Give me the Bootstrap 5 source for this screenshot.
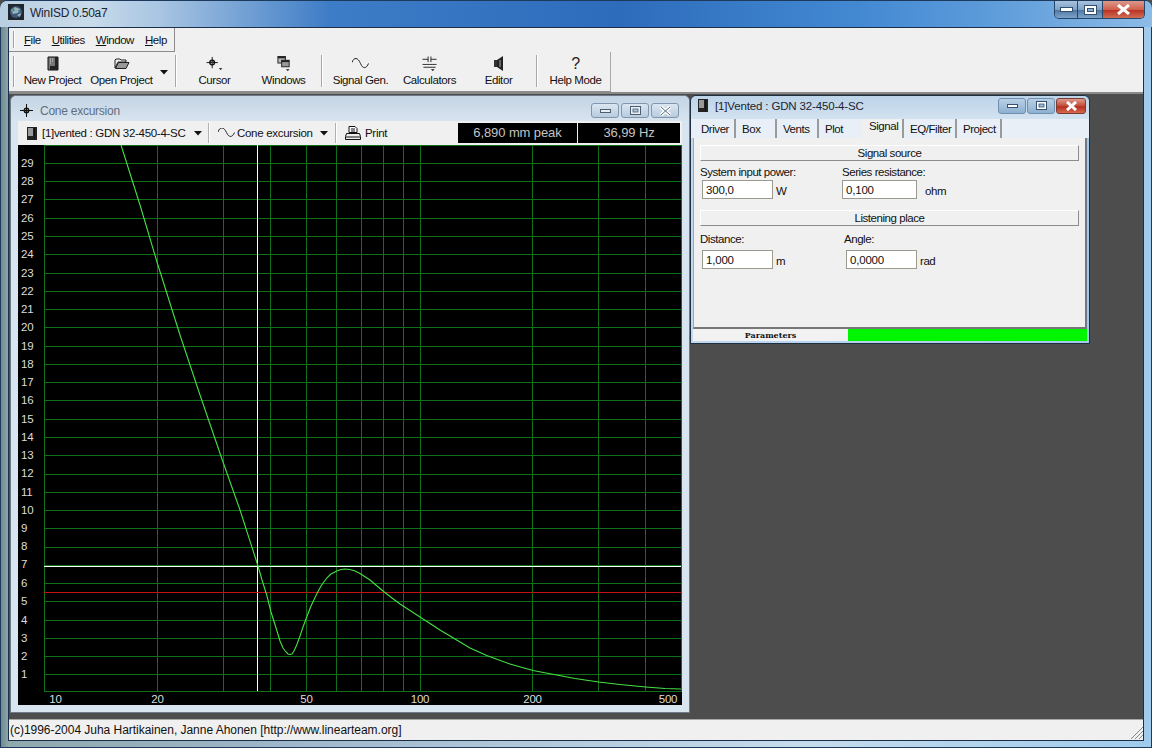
<!DOCTYPE html>
<html lang="en">
<head>
<meta charset="utf-8">
<title>WinISD 0.50a7</title>
<link rel="stylesheet" href="https://cdn.jsdelivr.net/npm/bootstrap@5.3.0/dist/css/bootstrap.min.css">
<style>
html,body{margin:0;width:1152px;height:748px;overflow:hidden;background:#4d4d4d}
body,.app-frame{font-family:"Liberation Sans",Arial,sans-serif;font-size:11.5px;line-height:14px;color:#111;letter-spacing:-.45px}
.app-frame{width:1152px;height:748px;background:linear-gradient(90deg,#6f8b90 0,#8fa9ad 8px,#9fb8cc 300px,#c6dcec 800px,#9fcbec 1152px);border:1px solid #1d3a5c;border-radius:7px 7px 0 0;position:relative}
.app-title{height:26px;margin:0 -1px;padding:0 0 0 8px;background:linear-gradient(90deg,#b9cfe2 0,#c8dbea 90px,#a8c5e2 160px,#3d7cc6 330px,#2d6cbb 620px,#4389d2 860px,#5f9ddb 1000px,#8cbbe6 1152px);border-radius:7px 7px 0 0;font-size:12px;letter-spacing:-.25px;color:#1c2430}
.app-title .caption{margin-left:6px;margin-top:-3px}
.app-ico{margin-top:-4px}
.cap-group{position:absolute;top:0;right:6px;height:18px;border:1px solid #27466c;border-top:0;border-radius:0 0 5px 5px;overflow:hidden}
.cap-min,.cap-max{background:linear-gradient(#a6c2de 0,#7fa2c6 50%,#4d75a2 52%,#7ea3c8 100%);border-right:1px solid #27466c}
.cap-min{width:23px}
.cap-max{width:25px}
.cap-close{width:41px;background:linear-gradient(#dc9a8c 0,#d0604e 50%,#b9301f 52%,#cf6d55 100%)}
.app-client{position:absolute;left:7px;top:26px;width:1136px;height:714px;background:#f0f0f0;border:1px solid #1c2f4a}
.menu-band{height:24px;background:#f0f0f0}
.menu-strip{width:166px;height:24px;padding-left:15px;border-right:1px solid #8c8c8c;border-bottom:1px solid #8c8c8c;position:relative;gap:11px;align-items:center}
.grip{position:absolute;left:4px;width:2px;background:#a0a0a0;border-right:1px solid #fff}
.menu-strip .grip{top:3px;bottom:3px}
.menu-item{color:#111;text-decoration:none}
.menu-item u{text-underline-offset:1px}
.tool-band{height:40px;background:#f0f0f0}
.tool-strip{width:602px;height:40px;padding-left:9px;border-right:1px solid #a8a8a8;border-bottom:1px solid #8c8c8c;position:relative}
.tool-strip .grip{top:4px;bottom:4px}
.tool-btn{width:69px;height:39px;padding:4px 0 0;border:0;border-radius:0;font-size:11.5px;letter-spacing:-.4px;line-height:14px;color:#111;display:flex;flex-direction:column;align-items:center;white-space:nowrap}
.tool-btn svg{display:block;height:15px;margin-bottom:2px}
.tool-btn .qmark{font-size:16px;height:15px;line-height:15px;margin-bottom:2px;color:#222}
.tool-drop{width:16px;display:flex;align-items:center;justify-content:center;padding-top:1px}
.tool-sep{background:#a8a8a8;border-right:1px solid #fff;width:2px;height:32px;margin:3px 3px 0}
.mdi-area{position:relative;height:627px;background:#4d4d4d;border-top:2px solid #8a8a8a}
.cone-win{position:absolute;left:1px;top:1px;width:680px;height:618px;background:#d8e4ef;border:1px solid #6d7b88;border-radius:6px 6px 0 0;padding:0 7px}
.cone-head{height:25px;background:linear-gradient(#c4d4e4,#d8e4ef);margin:0 -7px;padding:4px 10px 0 9px;border-radius:6px 6px 0 0;font-size:12px;letter-spacing:-.25px;color:#5f6f7f;gap:7px}
.win-btns{margin-left:auto;gap:2px}
.win-btn{width:28px;height:15px;border:1px solid #7f96ae;border-radius:3px;background:linear-gradient(#dbe6f1,#b9cbde);display:flex;align-items:center;justify-content:center}
.cone-tools{height:24px;background:#f0f0f0;font-size:11.5px;letter-spacing:-.3px}
.tsep2{width:2px;height:20px;background:#b0b0b0;border-right:1px solid #fff}
.readout{background:#000;color:#c4c4c4;height:20px;font-size:13px;letter-spacing:-.1px;line-height:20px;text-align:center}
.plot-svg{display:block;width:664px;height:560px;background:#000}
.plot-svg text{font-family:"Liberation Sans",Arial,sans-serif;font-size:11.5px;letter-spacing:-.25px;fill:#ddd}
.param-win{position:absolute;left:681px;top:1px;width:400px;height:249px;background:linear-gradient(90deg,#c2d9ee,#a3c9e9);border:1px solid #1e2f42;border-radius:6px 6px 0 0;padding:0 2px 2px}
.param-head{height:23px;margin:0 -2px;padding:0 3px 4px 7px;font-size:11.5px;letter-spacing:-.15px;color:#1c2430;background:linear-gradient(#bcd3e8,#d2e2f0);border-radius:6px 6px 0 0;gap:7px}
.param-head .win-btns{gap:1px}
.param-head .win-btn{height:16px;border-color:#6f8fb1;background:linear-gradient(#b9d0e6,#8eb0d0)}
.param-head .close-red{background:linear-gradient(#dd9c8f,#c24a38 50%,#b52f1e 55%,#d46a50);border-color:#7d3a30;width:30px}
.tab-row{height:19px;background:#e8eff6;margin:0 -2px;padding-left:4px}
.tab-item{display:block;height:19px;padding:3px 0 0 6px;color:#111;text-decoration:none;border-right:2px solid #9a9a9a}
.tab-item.on{background:#f0f0f0;padding-top:0;padding-left:7px}
.param-body{height:191px;background:#f0f0f0;border-right:2px solid #6d7a87;border-left:1px solid #9aa;padding:7px 6px 0 6px;border-bottom:2px solid #777}
.section-bar{height:16px;border:1px solid #fff;border-right-color:#8c8c8c;border-bottom-color:#8c8c8c;text-align:center;line-height:14px;background:#f0f0f0}
.field-lbl{height:14px;line-height:14px;white-space:nowrap}
.win-input{width:71px;height:19px;min-height:0;padding:1px 3px;font-size:11.5px;letter-spacing:-.2px;line-height:15px;border:1px solid #9a9a90;border-radius:0;background:#fff;color:#111;box-shadow:none}
.win-input.wide{width:75px}
.unit{margin-left:3px;margin-top:4px;white-space:nowrap}
.param-status{height:12px;background:#f2f2f2}
.param-status .pname{width:155px;text-align:center;font-family:"DejaVu Serif","Liberation Serif",serif;font-weight:700;font-size:8px;letter-spacing:0;line-height:12px;color:#111}
.param-status .pbar{flex:1;background:#00f500}
.status-line{height:20px;border-top:1px solid #a8a8a8;background:#f0f0f0;padding-left:1px;font-size:12px;letter-spacing:-.03px;line-height:21px;position:relative;color:#111}
.size-grip{position:absolute;right:0;bottom:0}
</style>
</head>
<body>
<div class="app-frame">
  <div class="app-title d-flex align-items-center">
    <svg class="app-ico" width="16" height="16" viewBox="0 0 16 16"><rect width="16" height="16" fill="#20262c"/><circle cx="8" cy="8" r="6" fill="#3b5a78"/><path d="M3 6l4-3 5 2-2 4-5 1zM9 11l4-2-1 4z" fill="#9fb0bd"/><path d="M5 4l2 2-3 2zM10 6l3 1-2 2z" fill="#2c8a8a"/></svg>
    <span class="caption">WinISD 0.50a7</span>
  </div>
  <div class="cap-group d-flex">
    <div class="cap-min d-flex align-items-center justify-content-center"><svg width="13" height="5"><rect x=".5" y=".5" width="12" height="4" fill="#fff" stroke="#34506e"/></svg></div>
    <div class="cap-max d-flex align-items-center justify-content-center"><svg width="13" height="10"><rect x=".5" y=".5" width="12" height="9" fill="#fff" stroke="#34506e"/><rect x="3.5" y="3.5" width="6" height="3" fill="#8fb0d0" stroke="#34506e"/></svg></div>
    <div class="cap-close d-flex align-items-center justify-content-center"><svg width="15" height="11"><path d="M2 1l11 9M13 1L2 10" stroke="#fff" stroke-width="3"/></svg></div>
  </div>

  <div class="app-client">
    <div class="menu-band">
      <nav class="menu-strip d-flex">
        <span class="grip"></span>
        <a class="menu-item" href="#"><u>F</u>ile</a>
        <a class="menu-item" href="#"><u>U</u>tilities</a>
        <a class="menu-item" href="#"><u>W</u>indow</a>
        <a class="menu-item" href="#"><u>H</u>elp</a>
      </nav>
    </div>
    <div class="tool-band">
      <div class="tool-strip d-flex">
        <span class="grip"></span>
        <button class="btn tool-btn"><svg width="12" height="15" viewBox="0 0 12 15"><path d="M1 1h10v13H1z" fill="#777" stroke="#111"/><path d="M8 1h3v13H8zM3 10h5v4H3z" fill="#222"/><path d="M3 3h1M5 5h1M3 7h1M5 3h1M3 5h1" stroke="#ccc"/></svg>New Project</button>
        <button class="btn tool-btn"><svg width="16" height="13" viewBox="0 0 16 13"><path d="M1 11V3l1-1h4l1 1h5v2H4l-3 6z" fill="#eee" stroke="#222"/><path d="M1.500 11.500l3-6h10.500l-3 6z" fill="#999" stroke="#222"/></svg>Open Project</button>
        <span class="tool-drop"><svg width="9" height="5"><path d="M0 0h8L4 4.500z" fill="#111"/></svg></span>
        <span class="tool-sep"></span>
        <button class="btn tool-btn"><svg width="18" height="16" viewBox="0 0 18 16"><path d="M6 1v12M0 7h12" stroke="#111"/><circle cx="6" cy="7" r="2.500" fill="none" stroke="#111" stroke-width="1.500"/><path d="M13 13h4l-2 2z" fill="#111"/></svg>Cursor</button>
        <button class="btn tool-btn"><svg width="14" height="16" viewBox="0 0 14 16"><rect x=".5" y=".5" width="8" height="7" fill="#bbb" stroke="#222"/><rect x=".5" y=".5" width="8" height="2" fill="#222"/><rect x="4.500" y="4.500" width="8" height="7" fill="#999" stroke="#222"/><rect x="4.500" y="4.500" width="8" height="2" fill="#222"/><path d="M9 14h4l-2 2z" fill="#111"/></svg>Windows</button>
        <span class="tool-sep"></span>
        <button class="btn tool-btn"><svg width="17" height="12" viewBox="0 0 17 12"><path d="M0 5C2-1 6 0 8.500 6s6 5 8 0" fill="none" stroke="#222"/></svg>Signal Gen.</button>
        <button class="btn tool-btn"><svg width="15" height="16" viewBox="0 0 15 16"><path d="M0 3.500h6M9 3.500h6M6 .5v6M9 .5v6M0 9h15M1 12h13" stroke="#222"/><path d="M1 10h1M4 10h1M7 10h1M10 10h1M13 10h1" stroke="#fff"/><path d="M9 14h4l-2 2z" fill="#111"/></svg>Calculators</button>
        <button class="btn tool-btn"><svg width="10" height="15" viewBox="0 0 10 15"><path d="M0 4h3v7H0z" fill="#333"/><path d="M3 4l6-4v15l-6-4z" fill="#222"/><path d="M6 4v7" stroke="#aaa"/></svg>Editor</button>
        <span class="tool-sep"></span>
        <button class="btn tool-btn"><span class="qmark">?</span>Help Mode</button>
      </div>
    </div>

    <div class="mdi-area">
      <section class="cone-win">
        <div class="cone-head d-flex align-items-center">
          <svg width="13" height="13" viewBox="0 0 13 13"><path d="M6.500 0v13M0 6.500h13" stroke="#111"/><circle cx="6.500" cy="6.500" r="2.200" fill="none" stroke="#111" stroke-width="1.500"/></svg>
          <span>Cone excursion</span>
          <div class="win-btns d-flex">
            <span class="win-btn"><svg width="11" height="4"><rect x=".5" y=".5" width="10" height="3" fill="#e8eef4" stroke="#4b5e72"/></svg></span>
            <span class="win-btn"><svg width="11" height="9"><rect x=".5" y=".5" width="10" height="8" fill="#e8eef4" stroke="#4b5e72"/><rect x="3" y="3" width="5" height="3" fill="#b0c4d8" stroke="#4b5e72" stroke-width=".8"/></svg></span>
            <span class="win-btn"><svg width="13" height="10"><path d="M2 1l9 8M11 1L2 9" stroke="#fff" stroke-width="3.500"/><path d="M2 1l9 8M11 1L2 9" stroke="#5a6c80" stroke-width="1"/></svg></span>
          </div>
        </div>
        <div class="cone-tools d-flex align-items-center">
          <span class="d-flex align-items-center text-nowrap" style="width:190px;padding-left:9px;gap:5px">
            <svg width="10" height="13" viewBox="0 0 10 13"><path d="M0 0h10v13H0z" fill="#222"/><path d="M1 1h5v8H1z" fill="#999"/><path d="M7 1h1v11H7z" fill="#111"/></svg>
            <span>[1]vented : GDN 32-450-4-SC</span>
            <svg class="ms-auto" style="margin-right:5px" width="9" height="5"><path d="M0 0h8L4 4.500z" fill="#111"/></svg>
          </span>
          <span class="tsep2" style="margin-right:8px"></span>
          <span class="d-flex align-items-center text-nowrap" style="width:117px;gap:2px">
            <svg width="17" height="10" viewBox="0 0 17 10"><path d="M0 4C2-2 6-1 8.500 4.500s6 5 8 0" fill="none" stroke="#222"/></svg>
            <span>Cone excursion</span>
            <svg class="ms-auto" style="margin-right:6px" width="9" height="5"><path d="M0 0h8L4 4.500z" fill="#111"/></svg>
          </span>
          <span class="tsep2"></span>
          <span class="d-flex align-items-center ms-2" style="gap:4px">
            <svg width="16" height="15" viewBox="0 0 16 15"><path d="M4 .5h6l2 2v4H4z" fill="#fff" stroke="#111"/><path d="M6 3h4M6 5h4" stroke="#111"/><path d="M1.500 7.500h13l1 3v3H.5v-3z" fill="#eee" stroke="#111"/><path d="M1 11h14" stroke="#111"/></svg>
            <span>Print</span>
          </span>
          <span class="readout ms-auto" style="width:119px">6,890 mm peak</span>
          <span class="readout" style="width:102px;margin:0 2px 0 1px">36,99 Hz</span>
        </div>
        <svg class="plot-svg" viewBox="18 145 664 560" shape-rendering="crispEdges">
          <path fill="none" stroke="#0f701a" stroke-width="1" d="M44 145.500H682M44 691.500H682M44 674.500H681M44 656.500H681M44 638.500H681M44 620.500H681M44 601.500H681M44 583.500H681M44 565.500H681M44 547.500H681M44 528.500H681M44 510.500H681M44 492.500H681M44 474.500H681M44 455.500H681M44 437.500H681M44 419.500H681M44 400.500H681M44 382.500H681M44 364.500H681M44 346.500H681M44 327.500H681M44 309.500H681M44 291.500H681M44 273.500H681M44 254.500H681M44 236.500H681M44 218.500H681M44 199.500H681M44 181.500H681M44 163.500H681"/>
          <path fill="none" stroke="#0f701a" stroke-width="1" d="M44.500 145V691M157.500 145V691M223.500 145V691M270.500 145V691M306.500 145V691M336.500 145V691M361.500 145V691M383.500 145V691M403.500 145V691M420.500 145V691M532.500 145V691M598.500 145V691M645.500 145V691M681.500 145V691"/>
          <path d="M44 566.500H681" stroke="#fff" fill="none"/>
          <path d="M257.500 145V691" stroke="#fff" fill="none"/>
          <path d="M44 592.500H681" stroke="#c01414" fill="none"/>
          <polyline shape-rendering="auto" fill="none" stroke="#45e045" stroke-width="1.100" points="121,145 140,205 157,262 180,335 200,395 223,462 240,510 258,566 262,580 266.700,595 271,612 276.700,630 280,641 283,648 286,652 288,654 290,654.500 292,654 294,651 296.700,645 300,636 303,627 306.700,617 311,606 316.700,594 321,586 326.700,578 331,574 336.700,571 341,569.500 345,569 350,569.500 355,571 360,573.500 370,580 383,591 392,598 400,604 420,617 440,630 456.700,640 470,648 486.700,655.500 510,664 533,670.500 556.700,675 575,678.500 598.700,682 620,684.500 645.700,687 665,688.500 681,689"/>
          <g>
            <text x="21" y="678">1</text><text x="21" y="660">2</text><text x="21" y="642">3</text><text x="21" y="624">4</text><text x="21" y="605">5</text><text x="21" y="587">6</text><text x="21" y="568">7</text><text x="21" y="550">8</text><text x="21" y="532">9</text><text x="21" y="514">10</text><text x="21" y="496">11</text><text x="21" y="477">12</text><text x="21" y="459">13</text><text x="21" y="441">14</text><text x="21" y="423">15</text><text x="21" y="404">16</text><text x="21" y="386">17</text><text x="21" y="368">18</text><text x="21" y="350">19</text><text x="21" y="331">20</text><text x="21" y="313">21</text><text x="21" y="295">22</text><text x="21" y="277">23</text><text x="21" y="258">24</text><text x="21" y="240">25</text><text x="21" y="222">26</text><text x="21" y="203">27</text><text x="21" y="185">28</text><text x="21" y="167">29</text>
          </g>
          <g text-anchor="middle">
            <text x="55.500" y="703">10</text><text x="157.500" y="703">20</text><text x="306.500" y="703">50</text><text x="420" y="703">100</text><text x="532.500" y="703">200</text><text x="668" y="703">500</text>
          </g>
        </svg>
      </section>

      <section class="param-win">
        <div class="param-head d-flex align-items-center">
          <svg width="10" height="13" viewBox="0 0 10 13"><path d="M0 0h10v13H0z" fill="#222"/><path d="M1 1h5v8H1z" fill="#999"/><path d="M7 1h1v11H7z" fill="#111"/></svg>
          <span>[1]Vented : GDN 32-450-4-SC</span>
          <div class="win-btns d-flex">
            <span class="win-btn"><svg width="11" height="4"><rect x=".5" y=".5" width="10" height="3" fill="#fff" stroke="#34506e"/></svg></span>
            <span class="win-btn"><svg width="11" height="9"><rect x=".5" y=".5" width="10" height="8" fill="#fff" stroke="#34506e"/><rect x="3" y="3" width="5" height="3" fill="#a0bcd8" stroke="#34506e" stroke-width=".8"/></svg></span>
            <span class="win-btn close-red"><svg width="13" height="10"><path d="M2 1l9 8M11 1L2 9" stroke="#fff" stroke-width="3"/></svg></span>
          </div>
        </div>
        <ul class="nav tab-row flex-nowrap">
          <li><a class="tab-item" style="width:41px" href="#">Driver</a></li>
          <li><a class="tab-item" style="width:41px" href="#">Box</a></li>
          <li><a class="tab-item" style="width:42px" href="#">Vents</a></li>
          <li><a class="tab-item" style="width:43px;border-right-color:transparent" href="#">Plot</a></li>
          <li><a class="tab-item on" style="width:42px" href="#">Signal</a></li>
          <li><a class="tab-item" style="width:53px" href="#">EQ/Filter</a></li>
          <li><a class="tab-item" style="width:45px" href="#">Project</a></li>
        </ul>
        <div class="param-body">
          <div class="section-bar">Signal source</div>
          <div class="d-flex" style="margin-top:4px">
            <div style="width:142px"><div class="field-lbl">System input power:</div><div class="d-flex" style="padding-left:2px;margin-top:1px"><input class="form-control win-input" value="300,0"><span class="unit">W</span></div></div>
            <div><div class="field-lbl">Series resistance:</div><div class="d-flex" style="margin-top:1px"><input class="form-control win-input wide" value="0,100"><span class="unit ms-2">ohm</span></div></div>
          </div>
          <div class="section-bar" style="margin-top:11px">Listening place</div>
          <div class="d-flex" style="margin-top:6px">
            <div style="width:144px"><div class="field-lbl">Distance:</div><div class="d-flex" style="padding-left:2px;margin-top:4px"><input class="form-control win-input" value="1,000"><span class="unit">m</span></div></div>
            <div><div class="field-lbl">Angle:</div><div class="d-flex" style="padding-left:2px;margin-top:4px"><input class="form-control win-input" value="0,0000"><span class="unit">rad</span></div></div>
          </div>
        </div>
        <div class="param-status d-flex"><span class="pname">Parameters</span><span class="pbar"></span></div>
      </section>
    </div>

    <div class="status-line">(c)1996-2004 Juha Hartikainen, Janne Ahonen [http://www.linearteam.org]
      <svg class="size-grip" width="14" height="14" viewBox="0 0 14 14"><path d="M2 14L14 2M6 14l8-8M10 14l4-4" stroke="#8a8a8a" fill="none"/></svg>
    </div>
  </div>
</div>
</body>
</html>
